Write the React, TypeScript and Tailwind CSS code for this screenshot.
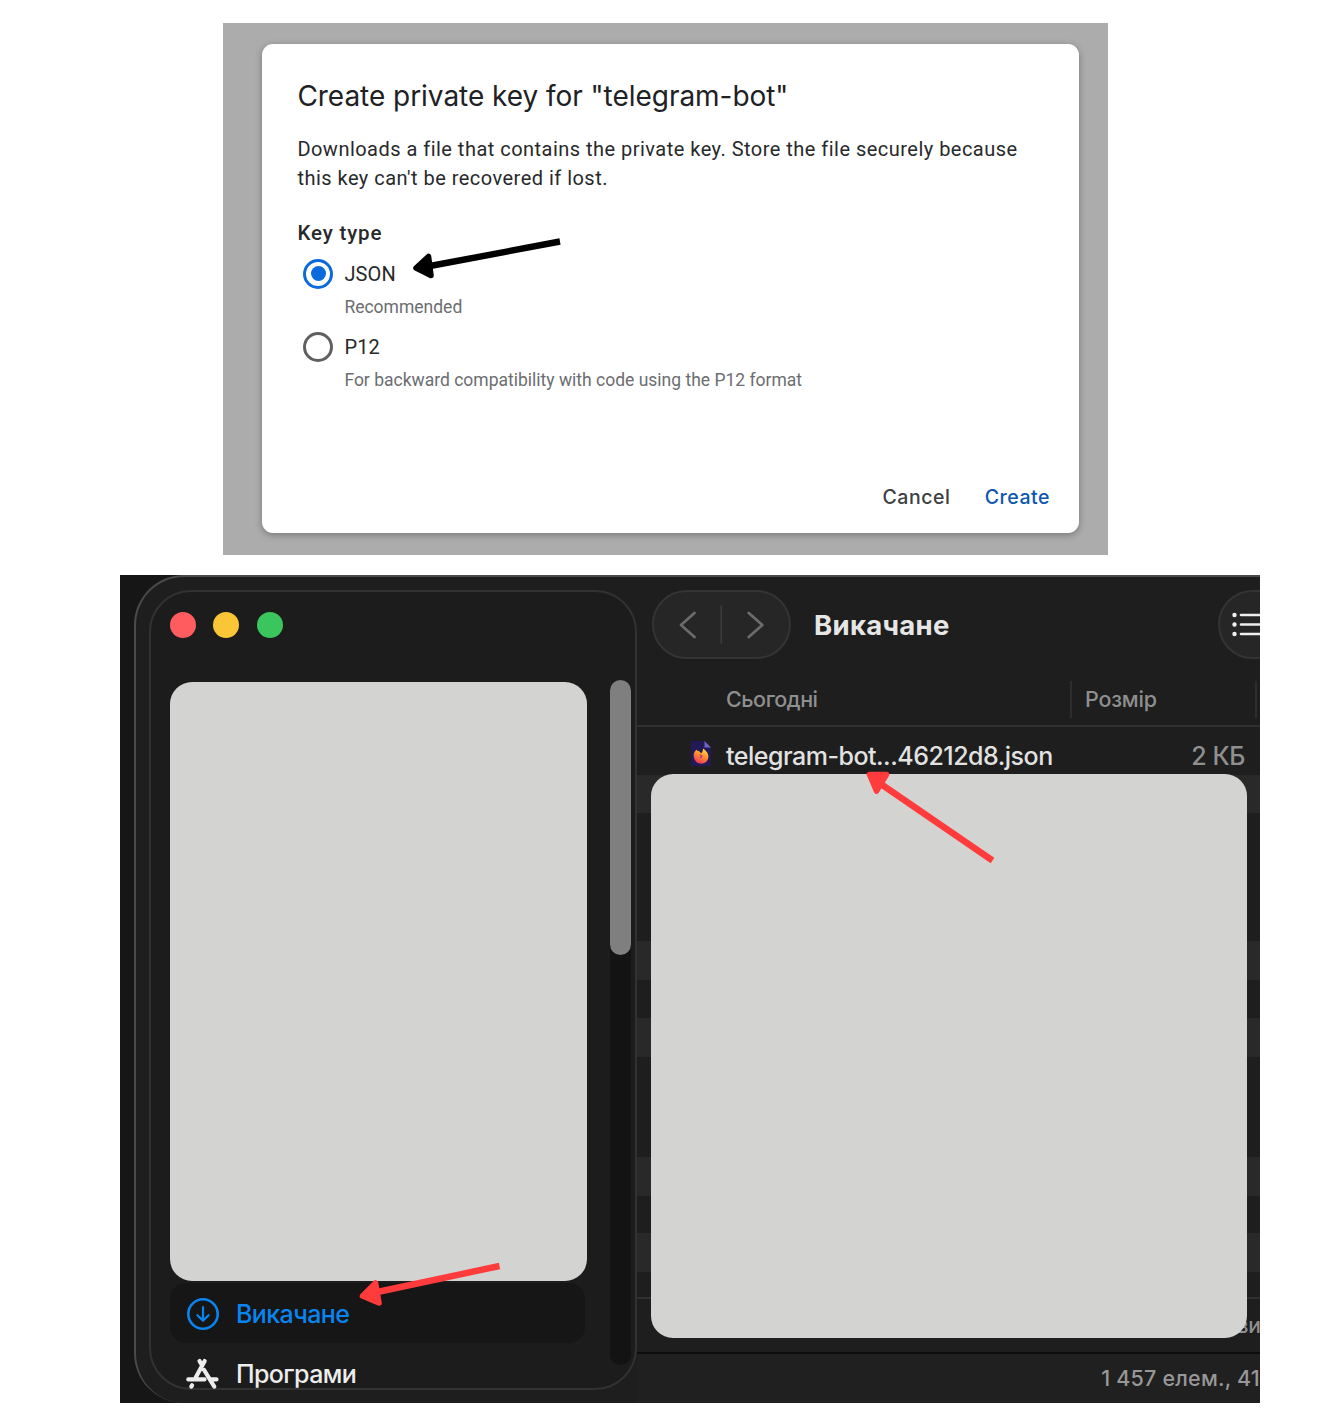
import type { ReactNode } from "react";

function Arrow({ className, width, height, line, head, color }: {
  className: string; width: number; height: number; line: string; head: string; color: string;
}) {
  return (
    <svg className={className} width={width} height={height} viewBox={`0 0 ${width} ${height}`} fill="none">
      <path d={line} stroke={color} strokeWidth={6.4} />
      <path d={head} fill={color} stroke={color} strokeWidth={5.6} strokeLinejoin="round" />
    </svg>
  );
}

function RadioOption({ label, hint, checked }: { label: string; hint: string; checked?: boolean }) {
  return (
    <div className="h-[73px] pl-[6px]">
      <div className="flex h-[30px] items-center">
        {checked ? (
          <span className="flex size-[30px] items-center justify-center rounded-full border-[3px] border-[#0b6bdc]">
            <span className="size-[15px] rounded-full bg-[#0b6bdc]" />
          </span>
        ) : (
          <span className="size-[30px] rounded-full border-[3px] border-[#5f6062]" />
        )}
        <span className="ml-[11px] text-[20px] tracking-[0.15px] text-[#28292b]">{label}</span>
      </div>
      <div className="ml-[41px] mt-[6px] text-[17.5px] leading-[24px] text-[#6b6d70]">
        <span className="whitespace-nowrap">{hint}</span>
      </div>
    </div>
  );
}

function KeyDialog() {
  return (
    <section className="relative ml-[223px] h-[532px] w-[885px] bg-[#acacac] pl-[39.4px] pt-[21.4px] font-['Roboto',sans-serif]">
      <div className="flex h-[489px] w-[816.5px] flex-col rounded-[11px] bg-white pl-[35px] pr-[29px] shadow-[0_2px_7px_rgba(0,0,0,0.3)]">
        <h1 className="mt-[31.6px] whitespace-nowrap font-['Inter',sans-serif] text-[28px] leading-[40px] tracking-[-0.04px] text-[#202124]">
          Create private key for "telegram-bot"
        </h1>
        <p className="mt-[19px] whitespace-nowrap text-[20px] leading-[29px] tracking-[0.475px] text-[#28292b]">
          Downloads a file that contains the private key. Store the file securely because
          <br />
          this key can't be recovered if lost.
        </p>
        <h2 className="mt-[26px] text-[20.5px] font-medium leading-[28px] tracking-[0.85px] text-[#28292b]">Key type</h2>
        <div className="mt-[12px]">
          <RadioOption label="JSON" hint="Recommended" checked />
          <RadioOption label="P12" hint="For backward compatibility with code using the P12 format" />
        </div>
        <div className="mt-[78px] flex justify-end gap-[34.5px] font-['Inter',sans-serif] text-[19.5px] font-medium leading-[28px] tracking-[0.5px]">
          <button className="text-[#3c4043]">Cancel</button>
          <button className="text-[#0b57b0]">Create</button>
        </div>
      </div>
      <Arrow className="absolute left-[187px] top-[207px]" width={160} height={60} color="#000"
        line="M150 11.5L20 36" head="M6 38L18.5 26.500L21 45.500Z" />
    </section>
  );
}

function SidebarItem({ icon, label, className }: { icon: ReactNode; label: string; className: string }) {
  return (
    <div className={`flex h-[60px] w-[415px] items-center rounded-[16px] pl-[16px] pt-[3px] ${className}`}>
      {icon}
      <span className="ml-[16px] mt-px whitespace-nowrap text-[25px] font-medium tracking-[-0.6px]">{label}</span>
    </div>
  );
}

function DownloadIcon() {
  return (
    <svg width="34" height="34" viewBox="0 0 34 34" fill="none" stroke="#0a84ef" strokeWidth="2.6" strokeLinecap="round" strokeLinejoin="round">
      <circle cx="17" cy="17" r="14.7" />
      <path d="M17 10.2V23.4M11.4 18.2L17 23.6L22.6 18.2" strokeWidth="2.2" />
    </svg>
  );
}

function AppsIcon() {
  return (
    <svg width="34" height="34" viewBox="0 0 34 34" fill="none" stroke="#ededed" strokeWidth="4.2" strokeLinecap="round">
      <path d="M18.7 4L9.7 20.5M13.5 4L16.1 8.5M2.3 22.4H18.5M25.500 22.4H30.500M18.1 13L28.3 29.6M6.1 28.2L5.3 29.6" />
    </svg>
  );
}

function Sidebar() {
  return (
    <aside className="mt-[13px] h-[800px] w-[488px] shrink-0 rounded-[42px] border-2 border-[#323232] bg-[#1c1c1c]">
      <div className="flex gap-[17.5px] pl-[18.5px] pt-[19.8px]">
        <span className="size-[26px] rounded-full bg-[#ff5c60]" />
        <span className="size-[26px] rounded-full bg-[#fac536]" />
        <span className="size-[26px] rounded-full bg-[#3ac55d]" />
      </div>
      <div className="mt-[42.200px] flex pl-[19px]">
        <div className="w-[440px]">
          <div className="mt-[2.4px] h-[598.6px] w-[417px] rounded-[22px] bg-[#d3d3d1]" />
          <SidebarItem className="mt-[2px] bg-[#161616] text-[#0a84ef]" icon={<DownloadIcon />} label="Викачане" />
          <SidebarItem className="text-[#ededed]" icon={<AppsIcon />} label="Програми" />
        </div>
        <div className="h-[685px] w-[21px] rounded-full bg-[#131313]">
          <div className="h-[275px] rounded-full bg-[#7f7f7f]" />
        </div>
      </div>
    </aside>
  );
}

function FirefoxFileIcon() {
  return (
    <svg width="22" height="27" viewBox="0 0 22 27">
      <defs>
        <linearGradient id="fox" x1="0.8" y1="0" x2="0.3" y2="1">
          <stop offset="0" stopColor="#ffdf3d" />
          <stop offset="0.5" stopColor="#ff8a2c" />
          <stop offset="1" stopColor="#f4325f" />
        </linearGradient>
      </defs>
      <path d="M1 1H14.5L21 7.5V26H1Z" fill="#211a56" />
      <path d="M14.5 1L21 7.5H14.5Z" fill="#6c63c8" />
      <path d="M4 13C5 11 6 10.6 6.3 9.6C7 11.2 8.5 11 9.5 11.4L11 13.200C12.5 12.600 12.600 10.700 13.200 8.500L15 10C18.2 13 19.4 16.4 17.5 20C15.8 23.2 12.6 24 10 23.6C5.5 23 2.8 18 4 13Z" fill="url(#fox)" />
      <path d="M9 14.8C10.500 14 12.800 14.800 12.400 16.700C12 18.400 10 18.600 9 17.600C10 17.4 10.5 16.800 10.600 16Z" fill="#b5409a" />
    </svg>
  );
}

const stripes = [
  "h-[38px] bg-[#292929]", "h-[128px]", "h-[39px] bg-[#292929]", "h-[38px]", "h-[39px] bg-[#292929]",
  "h-[100px]", "h-[39px] bg-[#292929]", "h-[37px]", "h-[39px] bg-[#292929]", "h-[25px]",
];

function FileBrowser() {
  return (
    <main className="flex w-[623px] shrink-0 flex-col">
      <div className="mt-[13px] flex h-[69px] shrink-0 items-center pl-[15px]">
        <div className="flex h-[69px] w-[139px] items-center justify-center rounded-full border-2 border-[#343434] bg-[#262626]">
          <svg width="100" height="40" viewBox="0 0 100 40" fill="none" stroke="#6b6b6b" strokeWidth="2.8" strokeLinecap="round" strokeLinejoin="round">
            <path d="M22.500 8L9 20L22.500 32" />
            <path d="M49.200 1V38" stroke="#3b3b3b" strokeWidth="1.6" />
            <path d="M76.800 8L90.300 20L76.800 32" />
          </svg>
        </div>
        <h2 className="ml-[23px] mt-[2px] whitespace-nowrap text-[27.5px] font-bold tracking-[0.3px] text-[#e6e6e6]">Викачане</h2>
        <div className="ml-auto h-[69px] w-[42px] overflow-hidden">
          <div className="flex h-[69px] w-[120px] items-center rounded-full border-2 border-[#343434] bg-[#262626] pl-[11px]">
            <svg width="40" height="26" viewBox="0 0 40 26" stroke="#efefef" strokeWidth="2.6" strokeLinecap="round">
              <path d="M10 3H38M10 12.500H38M10 22H38" />
              <path d="M3.500 3H3.51M3.500 12.500H3.51M3.500 22H3.51" strokeWidth="4.4" />
            </svg>
          </div>
        </div>
      </div>
      <div className="mt-[21px] flex h-[47px] shrink-0 items-start border-b-2 border-[#303030] text-[21.5px] font-medium leading-[38px] text-[#8f8f8f]">
        <span className="ml-[89px] w-[344px] tracking-[-0.45px]">Сьогодні</span>
        <span className="mt-px h-[37px] w-[187px] border-x-2 border-[#2d2d2d] pl-[13px] leading-[36px] tracking-[-0.2px]">Розмір</span>
      </div>
      <div className="relative h-[625px] shrink-0">
        <div className="flex h-[48px] items-center pl-[53px] pt-[12px]">
          <div className="-mt-[7px]"><FirefoxFileIcon /></div>
          <span className="ml-[14px] whitespace-nowrap text-[25px] font-medium tracking-[-0.5px] text-[#e2e2e2]">telegram-bot...46212d8.json</span>
          <span className="ml-auto mr-[15px] whitespace-nowrap text-[25px] font-medium tracking-[-0.4px] text-[#8f8f8f]">2 КБ</span>
        </div>
        {stripes.map((s, i) => <div key={i} className={s} />)}
        <div className="flex h-[55px] justify-end overflow-hidden border-t-2 border-[#303030] text-[21px] font-medium leading-[53px] text-[#8f8f8f]">
          <span className="-mr-px">ви</span>
        </div>
        <div className="absolute left-[14px] top-[47px] h-[564px] w-[596px] rounded-[22px] bg-[#d3d3d1]" />
      </div>
      <div className="flex h-[51px] shrink-0 justify-end overflow-hidden border-t-2 border-[#0c0c0c] bg-[#202020] text-[21.5px] font-medium leading-[48px] text-[#989898]">
        <span className="whitespace-nowrap tracking-[0.2px]">1 457 елем., 41</span>
      </div>
    </main>
  );
}

function FinderCapture() {
  return (
    <section className="relative ml-[120px] mt-[20px] h-[828px] w-[1140px] bg-[#161616] font-['Inter',sans-serif]">
      <div className="flex h-[828px] overflow-hidden">
        <div className="ml-[14px] flex w-[1126px] shrink-0 overflow-hidden rounded-l-[50px] border-l-2 border-t-2 border-[#4a4a4a] bg-[#1e1e1e] pl-[13px]">
          <Sidebar />
          <FileBrowser />
        </div>
      </div>
      <Arrow className="absolute left-[740px] top-[190px]" width={140} height={100} color="#ff3b3b"
        line="M132.500 95.500L15 15" head="M9.500 9.500L26.500 9.500L16.500 26Z" />
      <Arrow className="absolute left-[235px] top-[685px]" width={150} height={50} color="#ff3b3b"
        line="M144.500 6L20 32.500" head="M7.500 36L20.500 23L24 43Z" />
    </section>
  );
}

export default function App() {
  return (
    <div className="h-[1420px] w-[1344px] overflow-hidden bg-white pt-[23px]">
      <KeyDialog />
      <FinderCapture />
    </div>
  );
}
